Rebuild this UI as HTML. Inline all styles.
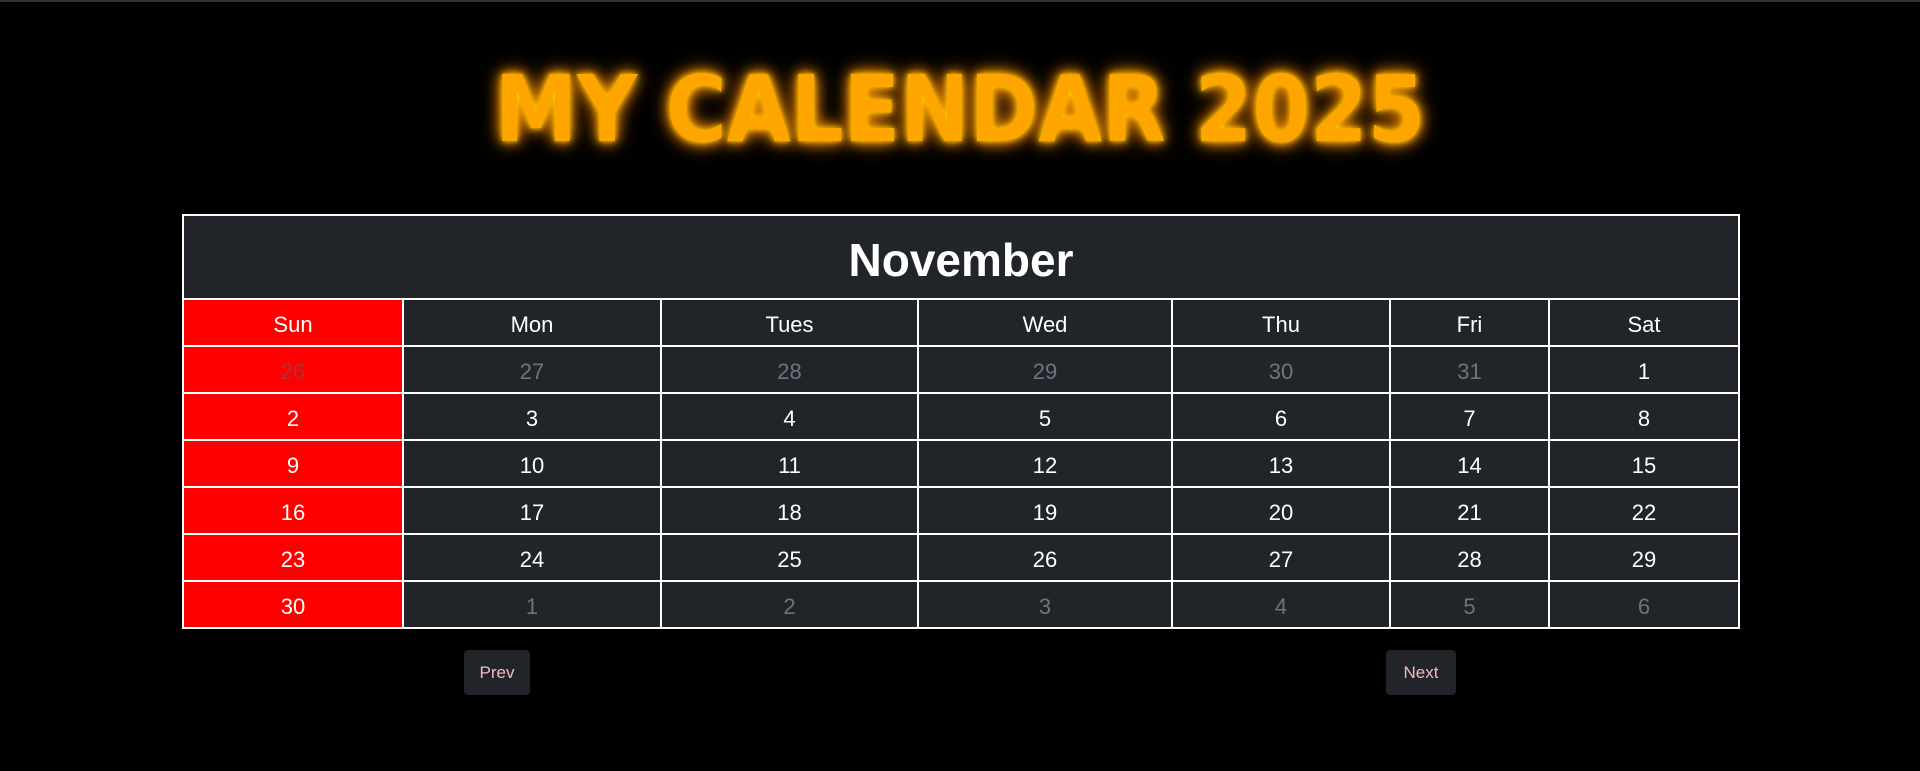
<!DOCTYPE html>
<html><head><style>
body{margin:0;background:#000;width:1920px;height:771px;overflow:hidden;font-family:"Liberation Sans",sans-serif;border-top:2px solid #333;box-sizing:border-box}
.t{position:absolute;left:0;width:1920px;top:55px;text-align:center}
.t span{display:inline-block;font-family:"DejaVu Sans",sans-serif;font-weight:bold;font-size:92px;color:#ffa500;transform:scaleX(0.9);text-shadow:0 0 6px #ffd700,0 0 14px #ff9900,0 0 22px #ff8800;line-height:110px}
table{position:absolute;left:182px;top:214px;width:1556px;border-collapse:collapse;table-layout:fixed}
td,th{border:2px solid #fff;background:#212529;color:#fff;text-align:center;font-size:22px;height:47px;padding:4px 0 0 0;box-sizing:border-box}
th.h{height:84px;font-size:46px;font-weight:bold;padding-top:6px}
.s{background:#f00}
.g{color:#6c757d;font-weight:300}
.b{position:absolute;top:650px;height:45px;background:#212529;color:#f4b6c0;font-size:17px;line-height:45px;text-align:center;border-radius:4px}
</style></head><body>
<div class="t"><span>MY CALENDAR 2025</span></div>
<table>
<colgroup><col style="width:220px"><col style="width:258px"><col style="width:257px"><col style="width:254px"><col style="width:218px"><col style="width:159px"><col style="width:190px"></colgroup>
<tr><th class="h" colspan="7">November</th></tr>
<tr><td class="s">Sun</td><td>Mon</td><td>Tues</td><td>Wed</td><td>Thu</td><td>Fri</td><td>Sat</td></tr>
<tr><td class="s g" style="color:#a33">26</td><td class="g">27</td><td class="g">28</td><td class="g">29</td><td class="g">30</td><td class="g">31</td><td>1</td></tr>
<tr><td class="s">2</td><td>3</td><td>4</td><td>5</td><td>6</td><td>7</td><td>8</td></tr>
<tr><td class="s">9</td><td>10</td><td>11</td><td>12</td><td>13</td><td>14</td><td>15</td></tr>
<tr><td class="s">16</td><td>17</td><td>18</td><td>19</td><td>20</td><td>21</td><td>22</td></tr>
<tr><td class="s">23</td><td>24</td><td>25</td><td>26</td><td>27</td><td>28</td><td>29</td></tr>
<tr><td class="s">30</td><td class="g">1</td><td class="g">2</td><td class="g">3</td><td class="g">4</td><td class="g">5</td><td class="g">6</td></tr>
</table>
<div class="b" style="left:464px;width:66px">Prev</div>
<div class="b" style="left:1386px;width:70px">Next</div>
</body></html>
